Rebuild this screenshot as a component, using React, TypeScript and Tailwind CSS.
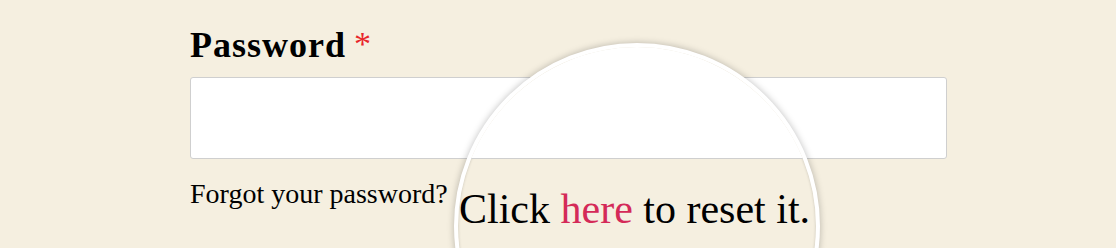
export default function App() {
  return (
    <div className="relative h-[248px] w-full overflow-hidden bg-[#f5efe0] font-['Liberation_Serif',serif] text-black">
      <div className="w-[757px] ml-[190px] pt-[27px]">
        <label className="flex items-start text-[36px] leading-[36px] font-bold tracking-[1px]">
          Password
          <span className="ml-[8px] mt-[-1px] text-[34px] font-normal text-[#e8262b]">*</span>
        </label>
        <input
          type="password"
          className="mt-[14px] block h-[82px] w-full rounded-[3px] border border-[#cfcfcf] bg-white"
        />
        <p className="mt-[21px] text-[28px] leading-[28px]">Forgot your password?</p>
      </div>

      {/* magnifier lens over the help text */}
      <div className="absolute left-[454px] top-[43px] h-[366px] w-[366px] overflow-hidden rounded-full border-[4px] border-white bg-[#f5efe0] shadow-[0_0_7px_rgba(0,0,0,0.25),inset_0_0_3px_rgba(0,0,0,0.2)]">
        <div className="h-[112px] border-b border-[#cfcfcf] bg-white"></div>
        <p className="mt-[29px] pl-[1px] text-[42px] leading-[42px] whitespace-nowrap">
          Click <span className="text-[#d42a58]">here</span> to reset it.
        </p>
      </div>
    </div>
  );
}
